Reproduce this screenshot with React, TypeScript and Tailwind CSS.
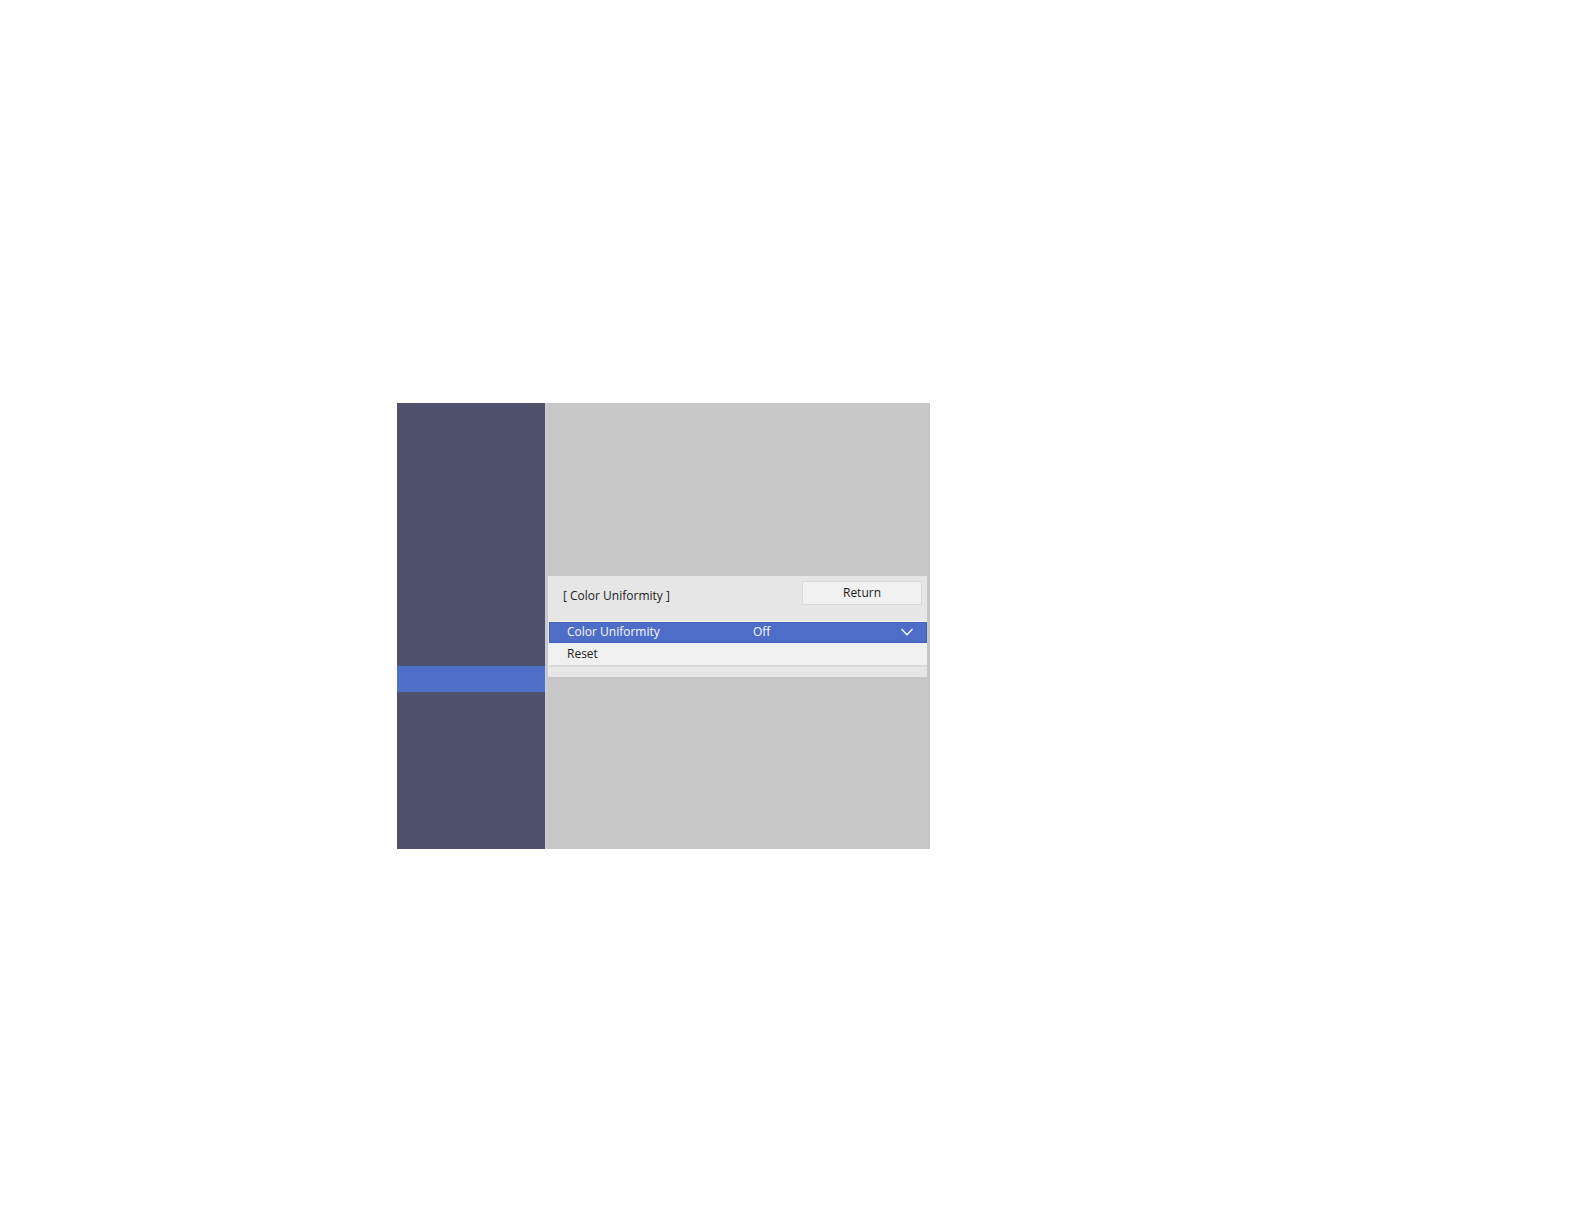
import { useState } from "react";

function ChevronDown() {
  return (
    <svg
      className="pointer-events-none absolute top-[5px] right-[13px] h-2 w-3"
      viewBox="0 0 12 8"
      fill="none"
      stroke="currentColor"
      strokeWidth="1.3"
      aria-hidden="true"
    >
      <path d="M0.5 1 L6 6.7 L11.5 1" />
    </svg>
  );
}

function Sidebar() {
  return (
    <nav aria-label="Menu" className="flex w-[150px] shrink-0 flex-col border-r-2 border-[#cbcbd2] bg-[#4e506c] pt-[263px]">
      <button type="button" aria-label="Current menu" className="h-[26px] w-full bg-[#4f70c9]" />
    </nav>
  );
}

function UniformityPanel() {
  const [mode, setMode] = useState("Off");
  return (
    <section className="border-l border-[#eeeeee] bg-[#e6e6e6] pb-[10px]">
      <header className="flex h-[46px] items-start justify-between border-b border-[#f6f6f6] pt-[5px] pr-[5px] pl-[14px]">
        <h1 className="pt-1 leading-[22px]">[ Color Uniformity ]</h1>
        <button
          type="button"
          className="h-6 w-[120px] border border-[#d8d8d8] bg-[#f1f1f1] leading-5"
        >
          Return
        </button>
      </header>
      <div className="relative flex h-[21px] items-start border border-[#3f60bd] bg-[#4e6dc8] pl-[17px] leading-[18px] text-[#f8faff]">
        <label htmlFor="uniformity" className="w-[186px] shrink-0">
          Color Uniformity
        </label>
        <select
          id="uniformity"
          value={mode}
          onChange={(e) => setMode(e.target.value)}
          className="min-w-0 flex-1 appearance-none bg-transparent outline-none"
        >
          <option>Off</option>
          <option>On</option>
        </select>
        <ChevronDown />
      </div>
      <button
        type="button"
        className="block h-6 w-full border-b-2 border-[#d8d8d8] bg-[#f0f0f0] pl-[18px] text-left leading-[22px]"
      >
        Reset
      </button>
    </section>
  );
}

export default function App() {
  return (
    <main className="min-h-screen bg-white px-[397px] pt-[403px] font-['Open_Sans','Noto_Sans',sans-serif] text-[12px] text-[#1c1c1c]">
      <div className="flex w-full max-w-[533px] bg-[#c7c7c7]">
        <Sidebar />
        <div className="min-w-0 flex-1 border-r border-[#c3c3c3] pt-[173px] pr-[2px] pb-[172px] pl-px">
          <UniformityPanel />
        </div>
      </div>
    </main>
  );
}
